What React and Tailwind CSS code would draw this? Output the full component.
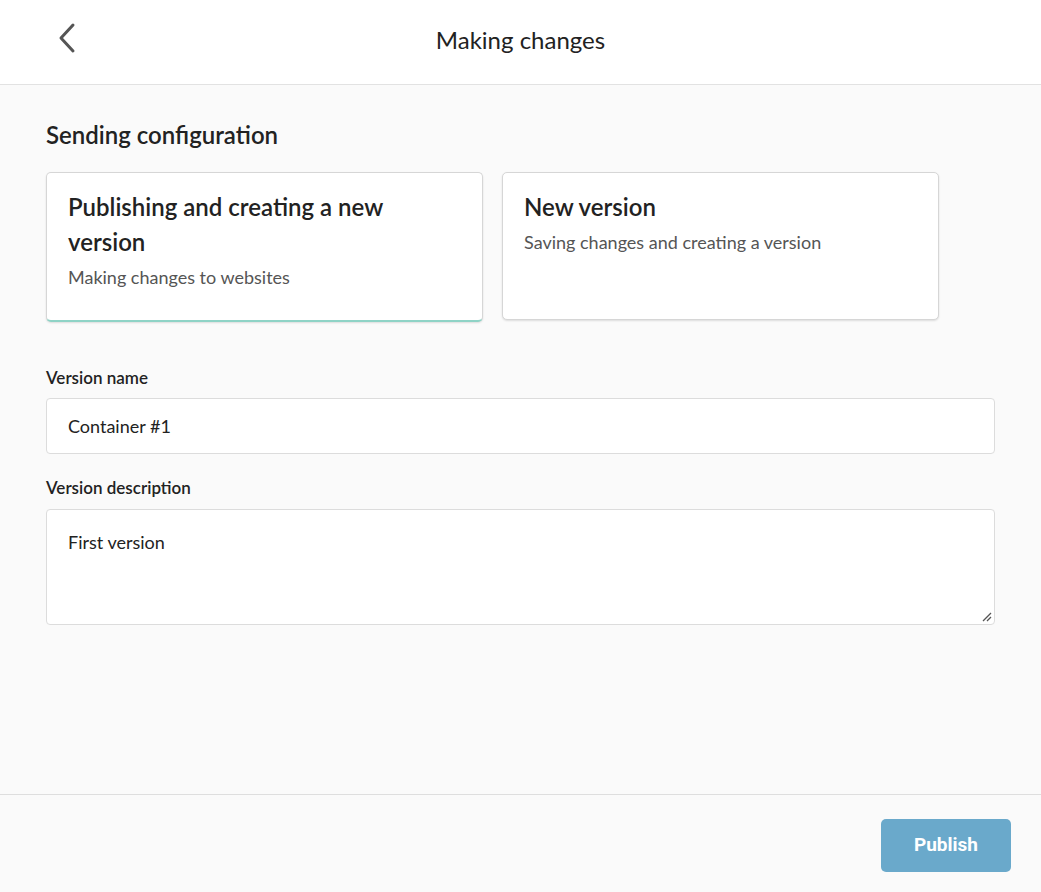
export default function App() {
  const f = { fontFamily: "Lato, 'Open Sans', sans-serif" };
  return (
    <div style={f} className="w-[1041px] h-[892px] bg-[#fafafa] flex flex-col text-[#222]">
      <header className="h-[85px] bg-white border-b border-[#e2e2e2] flex items-center relative shrink-0">
        <button className="absolute left-[54px] top-[22px] text-[#555]">
          <svg width="26" height="32" viewBox="0 0 26 32" fill="none" stroke="currentColor" strokeWidth="3" strokeLinecap="round" strokeLinejoin="round"><path d="M19 3 L7 16 L19 29" /></svg>
        </button>
        <h1 className="w-full text-center text-[24px] text-[#222] -mt-[5px]">Making changes</h1>
      </header>
      <main className="flex-1 px-[46px] pt-[34px]">
        <h2 className="text-[24px] font-semibold leading-[32px]">Sending configuration</h2>
        <div className="flex gap-[19px] mt-[21px]">
          <div className="w-[437px] h-[150px] bg-white rounded-[5px] border border-[#d6d6d6] shadow-[0_1px_2px_rgba(0,0,0,0.12)] border-b-[2px] border-b-[#8fd3c6] px-[21px] pt-[16px]">
            <div className="text-[24px] font-semibold leading-[35px]">Publishing and creating a new version</div>
            <div className="text-[18px] text-[#555] mt-[5px]">Making changes to websites</div>
          </div>
          <div className="w-[437px] h-[148px] bg-white rounded-[5px] border border-[#d6d6d6] shadow-[0_1px_2px_rgba(0,0,0,0.12)] px-[21px] pt-[16px]">
            <div className="text-[24px] font-semibold leading-[35px]">New version</div>
            <div className="text-[18px] text-[#555] mt-[5px]">Saving changes and creating a version</div>
          </div>
        </div>
        <label className="block text-[17px] font-semibold mt-[44px] leading-[24px]">Version name</label>
        <div className="mt-[8px] h-[56px] bg-white border border-[#dcdcdc] rounded-[4px] flex items-center px-[21px] text-[18px]">Container #1</div>
        <label className="block text-[17px] font-semibold mt-[22px] leading-[24px]">Version description</label>
        <div className="mt-[9px] h-[116px] bg-white border border-[#dcdcdc] rounded-[4px] px-[21px] pt-[19px] text-[18px] relative">
          First version
          <svg className="absolute right-[2px] bottom-[2px]" width="12" height="12" viewBox="0 0 12 12" stroke="#555" strokeWidth="1.3"><path d="M11 3 L3 11 M11 7 L7 11" /></svg>
        </div>
      </main>
      <footer className="h-[98px] border-t border-[#dedede] flex justify-end items-start pr-[30px] pt-[24px] shrink-0">
        <button className="w-[130px] h-[53px] rounded-[5px] bg-[#6aa9cb] text-white text-[19px] font-bold" style={{ fontFamily: "Roboto, sans-serif" }}>Publish</button>
      </footer>
    </div>
  );
}
